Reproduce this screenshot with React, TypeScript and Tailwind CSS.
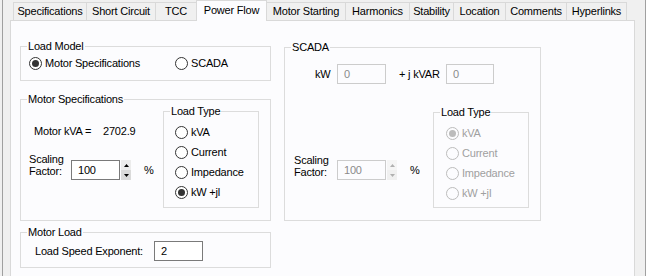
import React from "react";

function Radio({ label, checked = false, disabled = false }: { label: string; checked?: boolean; disabled?: boolean }) {
  return (
    <div className="flex h-[20px] items-center">
      <span
        className={`flex h-[13px] w-[13px] items-center justify-center rounded-full border ${
          disabled ? "border-[#bcbcbc] bg-[#fcfcfe]" : "border-[#333333] bg-white"
        }`}
      >
        {checked && (
          <span className={`h-[7px] w-[7px] rounded-full ${disabled ? "bg-[#bcbcbc]" : "bg-[#333333]"}`} />
        )}
      </span>
      <span className={`ml-[3px] ${disabled ? "text-[#a0a0a0]" : "text-black"}`}>{label}</span>
    </div>
  );
}

function Field({ value, w, disabled = false }: { value: string; w: string; disabled?: boolean }) {
  return (
    <div
      className={`flex h-[20px] items-center border pl-[6px] ${w} ${
        disabled ? "border-[#cccccc] bg-[#fcfcfe] text-[#8a8a8a]" : "border-[#7a7a7a] bg-white text-black"
      }`}
    >
      {value}
    </div>
  );
}

function Spinner({ disabled = false }: { disabled?: boolean }) {
  const c = disabled ? "#b0b0b0" : "#000000";
  return (
    <div className="ml-px flex h-[20px] w-[10px] flex-col">
      <div className={`flex h-[10px] items-center justify-center ${disabled ? "bg-[#f5f5f5]" : "bg-[#ececec]"}`}>
        <svg width="5" height="3" viewBox="0 0 5 3">
          <polygon points="2.5,0 5,3 0,3" fill={c} />
        </svg>
      </div>
      <div className={`flex h-[10px] items-center justify-center ${disabled ? "bg-[#f0f0f0]" : "bg-[#dadada]"}`}>
        <svg width="5" height="3" viewBox="0 0 5 3">
          <polygon points="0,0 5,0 2.5,3" fill={c} />
        </svg>
      </div>
    </div>
  );
}

function Group({ title, className, children }: { title: string; className: string; children?: React.ReactNode }) {
  return (
    <fieldset className={`border border-[#dcdcdc] ${className}`}>
      <legend className="ml-[6px] px-[1px] leading-[13px]">{title}</legend>
      {children}
    </fieldset>
  );
}

const tabs: { name: string; w: string; active?: boolean }[] = [
  { name: "Specifications", w: "w-[74px]" },
  { name: "Short Circuit", w: "w-[70px]" },
  { name: "TCC", w: "w-[42px]" },
  { name: "Power Flow", w: "w-[71px]", active: true },
  { name: "Motor Starting", w: "w-[80px]" },
  { name: "Harmonics", w: "w-[65px]" },
  { name: "Stability", w: "w-[45px]" },
  { name: "Location", w: "w-[53px]" },
  { name: "Comments", w: "w-[62px]" },
  { name: "Hyperlinks", w: "w-[61px]" },
];

export default function App() {
  return (
    <div className="h-[276px] w-[646px] overflow-hidden bg-[#f0f0f0] font-['Liberation_Sans',Arial,sans-serif] text-[11px] leading-[13px] tracking-[-0.2px] text-black">
      <div className="ml-[2px] h-full w-[644px] border-x border-[#a0a0a0] pl-[7px]">
        {/* tab strip */}
        <div className="ml-[3px] flex h-[20px] items-end">
          {tabs.map((t, i) =>
            t.active ? (
              <div
                key={t.name}
                className={`relative z-10 -mb-px flex h-[21px] items-start justify-center border border-b-0 border-[#d9d9d9] bg-[#fcfcfe] pt-[3px] ${t.w} ${i > 0 ? "-ml-px" : ""}`}
              >
                {t.name}
              </div>
            ) : (
              <div
                key={t.name}
                className={`flex h-[18px] items-center justify-center border border-b-0 border-[#d9d9d9] bg-[#f0f0f0] ${t.w} ${i > 0 ? "-ml-px" : ""}`}
              >
                {t.name}
              </div>
            )
          )}
        </div>

        {/* pane */}
        <div className="flex h-[300px] w-[625px] border border-[#d9d9d9] bg-[#fcfcfe] pl-[9px] pt-[19px]">
          {/* left column */}
          <div className="flex w-[251px] flex-col">
            <Group title="Load Model" className="h-[41px] w-[251px]">
              <div className="flex pl-[8px]">
                <div className="w-[146px]">
                  <Radio label="Motor Specifications" checked />
                </div>
                <Radio label="SCADA" />
              </div>
            </Group>

            <Group title="Motor Specifications" className="mt-[12px] h-[128px] w-[251px]">
              <div className="flex">
                <div className="w-[142px]">
                  <div className="mt-[19px] flex h-[13px] items-center pl-[13px]">
                    <span className="w-[69px]">Motor kVA =</span>
                    <span>2702.9</span>
                  </div>
                  <div className="ml-[8px] mt-[15px] flex items-start">
                    <div className="w-[42px] leading-[12px]">
                      Scaling
                      <br />
                      Factor:
                    </div>
                    <div className="mt-[7px] flex items-center">
                      <Field value="100" w="w-[49px]" />
                      <Spinner />
                      <span className="ml-[13px]">%</span>
                    </div>
                  </div>
                </div>
                <Group title="Load Type" className="-mt-px h-[103px] w-[96px]">
                  <div className="pl-[11px] pt-[4px]">
                    <Radio label="kVA" />
                    <Radio label="Current" />
                    <Radio label="Impedance" />
                    <Radio label="kW +jl" checked />
                  </div>
                </Group>
              </div>
            </Group>

            <Group title="Motor Load" className="mt-[5px] h-[42px] w-[251px]">
              <div className="mt-[2px] flex items-center pl-[14px]">
                <span className="w-[119px]">Load Speed Exponent:</span>
                <Field value="2" w="w-[49px]" />
              </div>
            </Group>
          </div>

          {/* right column */}
          <div className="ml-[13px] mt-[1px] flex w-[257px] flex-col">
            <Group title="SCADA" className="h-[180px] w-[257px]">
              <div className="mt-[10px] flex h-[20px] items-center pl-[30px]">
                <span className="w-[22px]">kW</span>
                <Field value="0" w="w-[49px]" disabled />
                <span className="ml-[13px] w-[47px]">+ j kVAR</span>
                <Field value="0" w="w-[48px]" disabled />
              </div>
              <div className="mt-[22px] flex">
                <div className="w-[148px]">
                  <div className="ml-[9px] mt-[48px] flex items-start">
                    <div className="w-[43px] leading-[12px]">
                      Scaling
                      <br />
                      Factor:
                    </div>
                    <div className="mt-[6px] flex items-center">
                      <Field value="100" w="w-[49px]" disabled />
                      <Spinner disabled />
                      <span className="ml-[13px]">%</span>
                    </div>
                  </div>
                </div>
                <Group title="Load Type" className="h-[102px] w-[96px]">
                  <div className="pl-[12px] pt-[4px]">
                    <Radio label="kVA" checked disabled />
                    <Radio label="Current" disabled />
                    <Radio label="Impedance" disabled />
                    <Radio label="kW +jI" disabled />
                  </div>
                </Group>
              </div>
            </Group>
          </div>
        </div>
      </div>
    </div>
  );
}
